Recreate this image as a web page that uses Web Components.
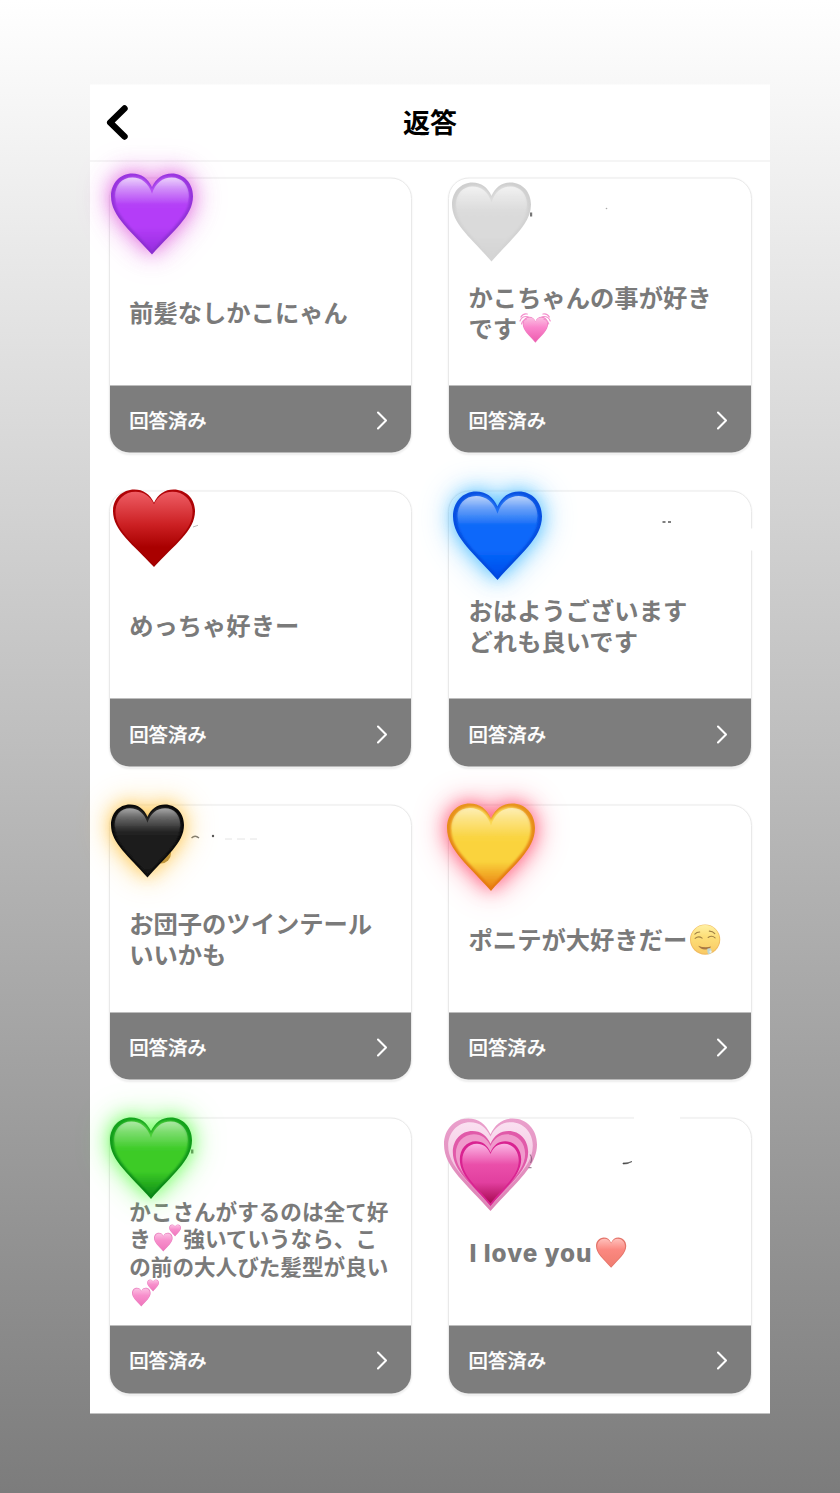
<!DOCTYPE html>
<html lang="ja">
<head>
<meta charset="utf-8">
<title>返答</title>
<style>
html,body{margin:0;height:100%}
body{font-family:"Inter","Noto Sans CJK JP",sans-serif;background:linear-gradient(#fff 0,#7c7c7c 100%);height:1493px;overflow:hidden}
</style>
</head>
<body>
<reply-panel>
  <reply-card><heart-badge slot="badge" kind="purple" style="left:1px;top:-5.5px;width:82px;height:81px"></heart-badge>前髪なしかこにゃん</reply-card>
  <reply-card><heart-badge slot="badge" kind="white" style="left:2.5px;top:4px;width:79px;height:79px"></heart-badge><name-trace slot="trace" kind="a"></name-trace>かこちゃんの事が好き<br>です<text-emoji kind="beat"></text-emoji></reply-card>
  <reply-card><heart-badge slot="badge" kind="red" style="left:3px;top:-2px;width:82px;height:77.5px"></heart-badge><name-trace slot="trace" kind="b"></name-trace>めっちゃ好きー</reply-card>
  <reply-card><heart-badge slot="badge" kind="blue" style="left:3.5px;top:-.5px;width:89px;height:88.5px"></heart-badge><name-trace slot="trace" kind="c"></name-trace>おはようございます<br>どれも良いです</reply-card>
  <reply-card><name-trace slot="badge" kind="d"></name-trace><heart-badge slot="badge" kind="black" style="left:.5px;top:-1px;width:73px;height:73px"></heart-badge>お団子のツインテール<br>いいかも</reply-card>
  <reply-card><heart-badge slot="badge" kind="yellow" style="left:-2.7px;top:-2px;width:88px;height:87.5px"></heart-badge>ポニテが大好きだー<text-emoji kind="drool"></text-emoji></reply-card>
  <reply-card small><heart-badge slot="badge" kind="green" style="left:0;top:-1px;width:82px;height:81.5px"></heart-badge><name-trace slot="trace" kind="e"></name-trace>かこさんがするのは全て好<br>き<text-emoji kind="two"></text-emoji>強いていうなら、こ<br>の前の大人びた髪型が良い<br><text-emoji kind="two"></text-emoji></reply-card>
  <reply-card latin><heart-badge slot="badge" kind="pink" style="left:-5px;top:0;width:93px;height:92.5px"></heart-badge><name-trace slot="badge" kind="f"></name-trace>I love you<text-emoji kind="heart"></text-emoji></reply-card>
</reply-panel>
<script>
const HEART='M50 17C45 6 37 0 26 0C11 0 0 12 0 28C0 53 25 71 50 100C75 71 100 53 100 28C100 12 89 0 74 0C63 0 55 6 50 17Z';
function define(name,render){
  customElements.define(name,class extends HTMLElement{
    constructor(){super();this.attachShadow({mode:'open'})}
    connectedCallback(){this.shadowRoot.innerHTML=render(this)}
  });
}

define('reply-panel',()=>`<style>
:host{display:flow-root;box-sizing:border-box;width:680px;height:1329px;margin:0 0 0 90px;background:#fff;transform:translateY(84.5px)}
header{display:grid;grid-template-columns:60px 1fr 60px;align-items:center;height:77px;box-sizing:border-box;border-bottom:1px solid #ececec}
header svg{display:block;margin:0 0 0 15px;width:26px;height:38px}
h1{margin:1px 0 0;text-align:center;font-size:27px;line-height:40px;font-weight:700;color:#000}
main{display:grid;grid-template-columns:303.4px 303.4px;column-gap:36px;row-gap:37px;padding:16px 0 0 19px}
</style>
<header><svg viewBox="0 0 26 38" fill="none" stroke="#000" stroke-width="6.4" stroke-linecap="round" stroke-linejoin="round"><path d="M19.5 5L5.2 19L19.5 33"/></svg><h1>返答</h1></header>
<main><slot></slot></main>`);

define('reply-card',el=>{const s=el.hasAttribute('small'),l=el.hasAttribute('latin');return `<style>
:host{display:flex;flex-direction:column;box-sizing:border-box;height:276.4px;position:relative;border:1.5px solid #e9e9e9;border-radius:21px;box-shadow:0 1px 2px rgba(0,0,0,.08)}
.name{height:62px}
.body{flex:1;display:flex;align-items:center;padding-left:19.2px}
p{margin:0;white-space:nowrap;color:#7a7a7a;font-weight:${l?800:700};font-size:${s?21.6:24.3}px;line-height:${s?27.5:30.8}px;--e:${s?1:1.12};${l?'letter-spacing:.95px;padding-left:1px':''}}
.foot{height:67.4px;box-sizing:border-box;padding:0 21px 0 19.2px;background:#7d7d7d;color:#fff;display:flex;align-items:center;justify-content:space-between;border-radius:0 0 19.5px 19.5px;font-size:19.4px;font-weight:500;-webkit-text-stroke:.25px #fff}
.foot svg{width:16px;height:22px;padding-top:3px}
</style>
<div class="name"></div>
<div class="body"><p><slot></slot></p></div>
<div class="foot"><span>回答済み</span><svg viewBox="0 0 16 22" fill="none" stroke="#fff" stroke-width="2.1" stroke-linecap="round" stroke-linejoin="round"><path d="M4 3L12 11L4 19"/></svg></div>
<slot name="trace"></slot><slot name="badge"></slot>`});

const KINDS={
 purple:{rim:'#9a36e0',rim2:'#8a2fd0',a:'#b95cf4',b:'#b43df8',c:'#982ee0',glow:'218,70,214',g:.6,hi:.75},
 white:{rim:'#cfcfcf',rim2:'#d4d4d4',a:'#dedede',b:'#dadada',c:'#d4d4d4',hi:.65},
 red:{rim:'#b00307',rim2:'#a00000',a:'#ee5d64',b:'#cc2023',c:'#a90000',hi:0},
 blue:{rim:'#0a52e2',rim2:'#0048dd',a:'#2f78f2',b:'#0868fa',c:'#004cec',glow:'50,180,255',g:.7,hi:.7},
 black:{rim:'#080808',rim2:'#101010',a:'#303030',b:'#1e1e1e',c:'#181818',glow:'255,190,50',g:.7,hi:.6},
 yellow:{rim:'#e8941c',rim2:'#e57810',a:'#fbdc62',b:'#fad33c',c:'#ea8213',glow:'255,50,90',g:.65,hi:.55},
 green:{rim:'#14a51c',rim2:'#0a8418',a:'#52d240',b:'#3ccb26',c:'#109018',glow:'90,255,70',g:.7,hi:.55},
 pink:{hi:0}
};
define('heart-badge',el=>{
 const kind=el.getAttribute('kind'),k=KINDS[kind],red=kind==='red';
 const shade=`<linearGradient id="f" x2="0" y2="1"><stop offset="0" stop-color="${k.a}"/><stop offset=".45" stop-color="${k.b}"/><stop offset="${red?.76:.68}" stop-color="${red?k.c:k.b}"/><stop offset="1" stop-color="${k.c}"/></linearGradient>
 <linearGradient id="r" x2="0" y2="1"><stop offset="0" stop-color="${k.rim}"/><stop offset="1" stop-color="${k.rim2}"/></linearGradient>
 <linearGradient id="h" gradientUnits="userSpaceOnUse" x1="0" y1="4" x2="0" y2="38"><stop offset="0" stop-color="#fff" stop-opacity="${k.hi}"/><stop offset=".4" stop-color="#fff" stop-opacity="${k.hi*.5}"/><stop offset="1" stop-color="#fff" stop-opacity="0"/></linearGradient>
 <filter id="s" x="-10%" y="-10%" width="120%" height="120%"><feGaussianBlur stdDeviation="1.5"/></filter>
 <filter id="t" x="-10%" y="-10%" width="120%" height="120%"><feGaussianBlur stdDeviation=".7"/></filter>`;
 const body=kind==='pink'?`<defs><linearGradient id="p" x2="0" y2="1"><stop offset="0" stop-color="#fbb5e4"/><stop offset=".35" stop-color="#ea4faa"/><stop offset=".65" stop-color="#e23f9f"/><stop offset="1" stop-color="#a80a52"/></linearGradient>
 <linearGradient id="o" x2="0" y2="1"><stop offset="0" stop-color="#eaa0cc"/><stop offset="1" stop-color="#dc82b4"/></linearGradient>
 <linearGradient id="q" x2="0" y2="1"><stop offset="0" stop-color="#fae1f1"/><stop offset="1" stop-color="#efabd3"/></linearGradient></defs>
 <path fill="url(#o)" d="${HEART}"/><path fill="url(#q)" transform="translate(4.5 4) scale(.91)" d="${HEART}"/>
 <g transform="translate(9.5 13.5) scale(.81)"><path fill="#e15aa9" d="${HEART}"/><path fill="#f09acc" transform="translate(4 4.5) scale(.92)" d="${HEART}"/></g>
 <g transform="translate(17 24.5) scale(.66 .70)"><path fill="#d92391" d="${HEART}"/><path fill="url(#p)" transform="translate(4 4) scale(.92)" d="${HEART}"/></g>`
 :`<defs>${shade}</defs><path fill="url(#r)" d="${HEART}"/><path fill="url(#f)" transform="translate(${red?'3 3) scale(.94 .94':'4.5 4) scale(.91 .915'})" ${red?'':'filter="url(#s)"'} d="${HEART}"/>
 ${k.hi?`<path fill="url(#h)" filter="url(#t)" d="M50 25C46 12 37 5 26 5C13 5 5 15 5 28L7 40H93L95 28C95 15 87 5 74 5C63 5 54 12 50 25Z"/>`:''}`;
 return `<style>:host{position:absolute;display:block}svg{display:block;width:100%;height:100%;overflow:visible;${k.glow?`filter:drop-shadow(0 0 9px rgba(${k.glow},${k.g})) drop-shadow(0 0 15px rgba(${k.glow},.45))`:''}}</style><svg viewBox="0 0 100 100" preserveAspectRatio="none">${body}</svg>`;
});

const EMOJI={
 heart:[`<path d="${HEART}" fill="#e4746a"/><path d="${HEART}" fill="url(#g)" transform="translate(4 4) scale(.92)"/>`,['#ffc0bb','#fb8880','#f07d70']],
 beat:[`<g transform="translate(9 14) scale(.84 .86)"><path d="${HEART}" fill="#ee7cc0"/><path d="${HEART}" fill="url(#g)" transform="translate(3 3) scale(.94)"/></g><g fill="none" stroke="#f490cd" stroke-width="4" stroke-linecap="round"><path d="M3 15Q10 2 24 5M0 28Q7 10 27 14M5 38Q9 24 21 22M97 15Q90 2 76 5M100 28Q93 10 73 14M95 38Q91 24 79 22"/></g>`,['#fbc0e2','#fa86cc','#ed5cae']],
 two:[`<g transform="translate(0 31) scale(.69)"><path d="${HEART}" fill="#e980bf"/><path d="${HEART}" fill="url(#g)" transform="translate(4 4) scale(.92)"/></g><g transform="translate(56 0) scale(.44)"><path d="${HEART}" fill="#e980bf"/><path d="${HEART}" fill="url(#g)" transform="translate(4 4) scale(.92)"/></g>`,['#fcc0e3','#f78fcc','#ef76bc']],
 drool:[`<circle cx="50" cy="50" r="50" fill="#f1bd62"/><circle cx="50" cy="49" r="47" fill="url(#g)"/><g fill="none" stroke="#a18045" stroke-width="3.6" stroke-linecap="round"><path d="M16 32Q22 25 32 25M64 22Q75 22 82 30M17 46Q28 36 40 45M60 43Q72 34 83 44"/></g><path d="M27 70Q48 79 70 73Q66 83 50 83Q34 81 27 70Z" fill="#a97843"/><path d="M57 80Q65 76 71 82L68 96Q62 102 58 94Z" fill="#bcd5d6"/><circle cx="68" cy="90" r="4" fill="#e4eeee"/>`,['#fff0a3','#fddf79','#f9ca65']]
};
define('text-emoji',el=>{
 const [art,c]=EMOJI[el.getAttribute('kind')];
 return `<style>:host{display:inline-flex;align-items:center;width:calc(32.5px*var(--e));height:1em;vertical-align:-.2em;line-height:0}svg{flex:none;width:calc(27px*var(--e));height:calc(27px*var(--e));margin-left:calc(2.8px*var(--e));transform:translateY(1px);overflow:visible}</style><svg viewBox="0 0 100 100"><defs><linearGradient id="g" x2="0" y2="1"><stop stop-color="${c[0]}"/><stop offset=".4" stop-color="${c[1]}"/><stop offset="1" stop-color="${c[2]}"/></linearGradient></defs>${art}</svg>`;
});

const TRACE={
 a:'<rect x="82" y="35" width="2.2" height="4" fill="#777"/><circle cx="158.5" cy="31" r=".8" fill="#aaa"/>',
 b:'<path d="M84 36.5L89 34.8" stroke="#bbb" stroke-width="1"/>',
 c:'<path d="M214.5 31.5h3M220 31.5h3" stroke="#555" stroke-width="1.4"/><rect x="299" y="38" width="7" height="22" fill="#fff"/>',
 d:'<path d="M82.5 34.5Q86 31 90 34.5" fill="none" stroke="#777" stroke-width="1.4"/><circle cx="104" cy="32.5" r="1.2" fill="#555"/><path d="M116 35.5h7M128 35.5h8M141 35.5h7" stroke="#ddd" stroke-width=".8"/><circle cx="52" cy="50" r="10" fill="#8d7440"/>',
 e:'<rect x="82" y="32" width="2.4" height="4" fill="#666"/>',
 f:'<path d="M82 37Q85 41 82.5 45.5M80.5 50.2h3" fill="none" stroke="#7b5570" stroke-opacity=".7" stroke-width="1.2"/><path d="M175 46.5Q179 47 184 44Q181 45.5 175 45.5Z" fill="#333" stroke="#555" stroke-width=".7"/><rect x="186" y="-2" width="46" height="4" fill="#fff"/>'
};
define('name-trace',el=>`<style>:host{position:absolute;left:-1.5px;top:-1.5px;width:303.5px;height:70px}svg{display:block;overflow:visible}</style><svg width="303.5" height="70">${TRACE[el.getAttribute('kind')]}</svg>`);
</script>
</body>
</html>
